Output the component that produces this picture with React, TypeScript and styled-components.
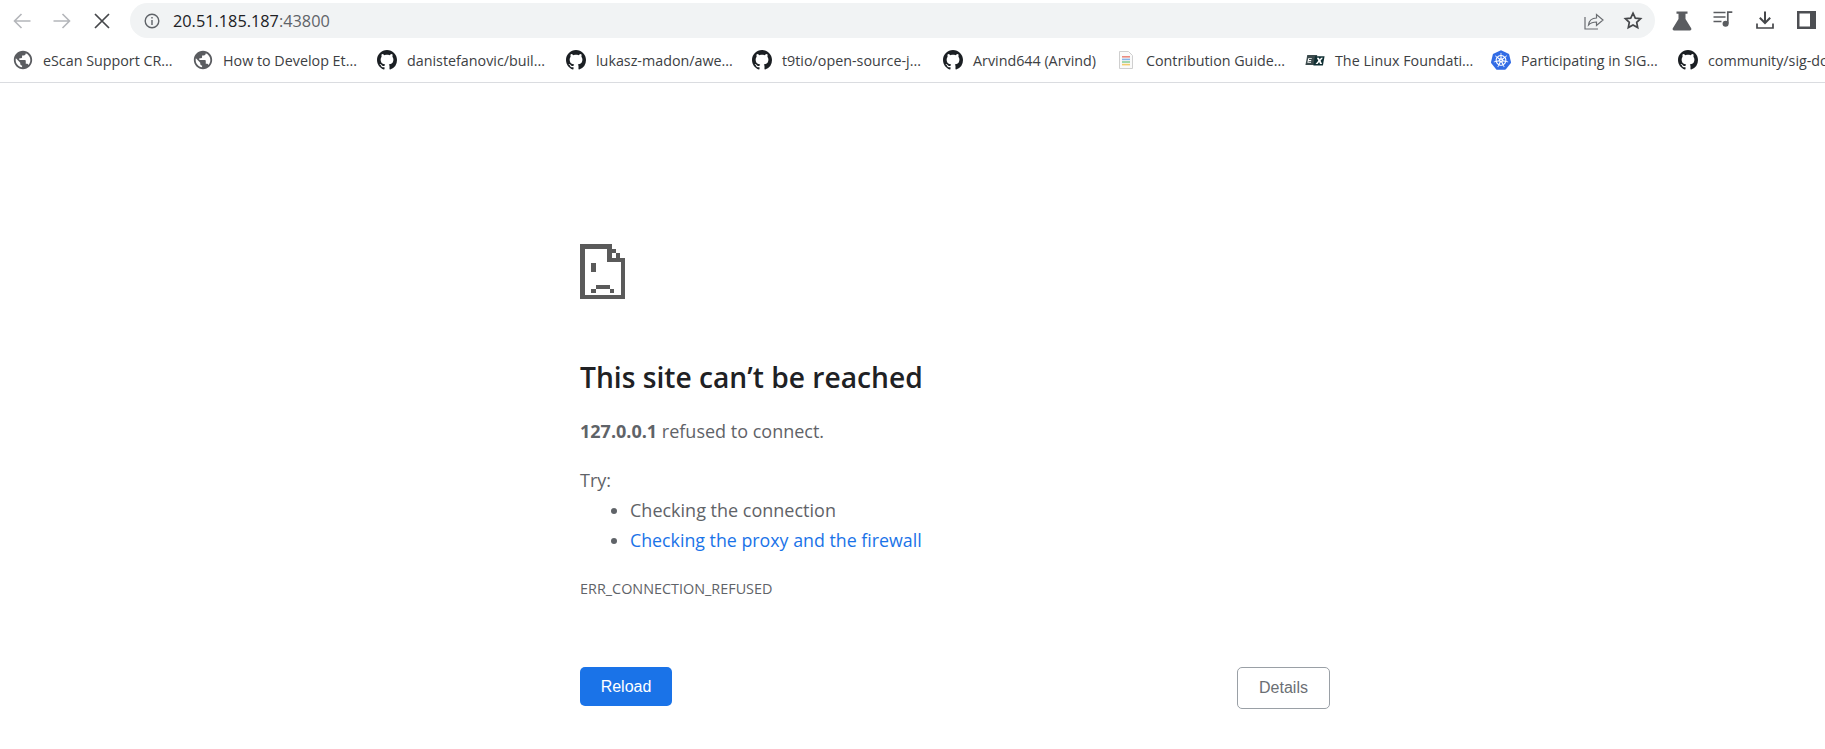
import styled, { createGlobalStyle } from 'styled-components'
import { BsGithub } from 'react-icons/bs'
import { MdPublic } from 'react-icons/md'
import { SiKubernetes } from 'react-icons/si'

const GlobalStyle = createGlobalStyle`
  html, body {
    margin: 0;
    background: #fff;
    overflow: hidden;
  }
  body {
    font-family: "Open Sans", "Noto Sans", sans-serif;
  }
`

const bookmarks = [
  { icon: 'globe', label: 'eScan Support CR...', width: 180 },
  { icon: 'globe', label: 'How to Develop Et...', width: 184 },
  { icon: 'github', label: 'danistefanovic/buil...', width: 189 },
  { icon: 'github', label: 'lukasz-madon/awe...', width: 186 },
  { icon: 'github', label: 't9tio/open-source-j...', width: 191 },
  { icon: 'github', label: 'Arvind644 (Arvind)', width: 173 },
  { icon: 'doc', label: 'Contribution Guide...', width: 189 },
  { icon: 'edx', label: 'The Linux Foundati...', width: 186 },
  { icon: 'k8s', label: 'Participating in SIG...', width: 187 },
  { icon: 'github', label: 'community/sig-docs', width: 190 },
]

function Favicon({ kind }: { kind: string }) {
  if (kind === 'globe') return <GlobeIcon />
  if (kind === 'github') return <GithubIcon />
  if (kind === 'k8s') return <KubeIcon />
  if (kind === 'doc') {
    return (
      <svg width="20" height="20" viewBox="0 0 20 20">
        <path d="M3.5 1.5h9l4 4v13h-13z" fill="#fafafa" stroke="#cfcfcf" />
        <rect x="6" y="6" width="8" height="1.6" fill="#ea8a80" />
        <rect x="6" y="8.6" width="8" height="1.6" fill="#8ab4e8" />
        <rect x="6" y="11.2" width="8" height="1.6" fill="#8ccf9c" />
        <rect x="6" y="13.8" width="8" height="1.6" fill="#f2cc6b" />
      </svg>
    )
  }
  return (
    <svg width="22" height="20" viewBox="0 0 22 20">
      <path d="M2.5 4.5h11l-2 11h-11z" fill="#3b4a4c" />
      <path d="M11 6h10.5l-1.8 10H9.2z" fill="#0f2f33" />
      <path d="M13 7.5l1.6 3.2-3 3.8h2.2l1.7-2.3 1 2.3h2.3l-1.7-3.6 2.7-3.4h-2.2l-1.4 2-.9-2z" fill="#fff" />
      <path d="M3.5 8h4v1h-3l-.2 1h2.6l-.2 1H4l-.2 1h3l-.2 1h-4z" fill="#fff" />
    </svg>
  )
}

function App() {
  return (
    <>
      <GlobalStyle />
      <Toolbar>
        <NavButton $color="#b4b6ba">
          <svg width="20" height="20" viewBox="0 0 20 20" fill="none" stroke="currentColor" strokeWidth="1.6">
            <path d="M18.5 10H2.5M9.5 3l-7 7 7 7" />
          </svg>
        </NavButton>
        <NavButton $color="#b4b6ba">
          <svg width="20" height="20" viewBox="0 0 20 20" fill="none" stroke="currentColor" strokeWidth="1.6">
            <path d="M1.5 10h16M10.5 3l7 7-7 7" />
          </svg>
        </NavButton>
        <NavButton $color="#45474a">
          <svg width="18" height="18" viewBox="0 0 18 18" fill="none" stroke="currentColor" strokeWidth="1.7">
            <path d="M2 2l14 14M16 2L2 16" />
          </svg>
        </NavButton>
        <AddressBar>
          <svg width="16" height="16" viewBox="0 0 16 16" fill="none" stroke="#5f6368" strokeWidth="1.4">
            <circle cx="8" cy="8" r="6.8" />
            <path d="M8 7v5M8 4v1.6" />
          </svg>
          <Url>
            20.51.185.187<Port>:43800</Port>
          </Url>
          <BarActions>
            <svg width="20" height="18" viewBox="0 0 20 18" fill="none" stroke="#6a6d71" strokeWidth="1.2">
              <path d="M1 5v12h13" />
              <path d="M4.5 13c.6-4.5 3.4-7 8-7V2.5l6.5 5.5-6.500 5.500V10c-3.500 0-6 1-8 3z" />
            </svg>
            <svg width="20" height="19" viewBox="0 0 20 19" fill="none" stroke="#45474a" strokeWidth="1.7">
              <path d="M10 2.200l2.300 4.900 5.300.6-3.900 3.600 1 5.300L10 14l-4.700 2.600 1-5.300-3.900-3.600 5.300-.6z" />
            </svg>
          </BarActions>
        </AddressBar>
        <ExtensionList>
          <ExtensionButton>
            <svg width="20" height="20" viewBox="0 0 20 20" fill="#5a5c60">
              <path d="M4.500 0.500h11v2.200h-2v5.200l5.700 9.300c.6 1-.1 2.300-1.300 2.300H2.100C.9 19.500.2 18.200.8 17.200l5.700-9.300V2.700h-2z" />
            </svg>
          </ExtensionButton>
          <ExtensionButton>
            <svg width="20" height="16" viewBox="0 0 20 16" fill="none" stroke="#5a5c60" strokeWidth="1.7">
              <path d="M0.500 1.500h12M0.500 6h12M0.500 10.500h8" />
              <path d="M14.800 12.500V1.200h4.500" />
              <circle cx="12.600" cy="12.800" r="2.200" fill="#5a5c60" />
            </svg>
          </ExtensionButton>
          <ExtensionButton>
            <svg width="18" height="18" viewBox="0 0 18 18" fill="none" stroke="#45474a" strokeWidth="2">
              <path d="M9 0.500v11M3.800 6.800L9 12l5.200-5.200" />
              <path d="M1 12.500v4.500h16v-4.500" strokeWidth="1.700" />
            </svg>
          </ExtensionButton>
          <ExtensionButton>
            <svg width="19" height="18" viewBox="0 0 19 18">
              <rect x="1.250" y="1.250" width="16.500" height="15.500" fill="none" stroke="#4d4f53" strokeWidth="2.500" />
              <rect x="13" y="1" width="5" height="16" fill="#4d4f53" />
            </svg>
          </ExtensionButton>
        </ExtensionList>
      </Toolbar>

      <BookmarkBar>
        {bookmarks.map((b) => (
          <Bookmark key={b.label} $width={b.width}>
            <FaviconSlot>
              <Favicon kind={b.icon} />
            </FaviconSlot>
            <BookmarkLabel>{b.label}</BookmarkLabel>
          </Bookmark>
        ))}
      </BookmarkBar>

      <Main>
        <SadIcon width="45" height="55" viewBox="0 0 45 55" fill="#5a5a5a" shapeRendering="crispEdges">
          <path d="M0 0h31.500v4.500H4.500v46h36V18H45v37H0z" />
          <path d="M27 4.500h4.500V14H45v4H27z" />
          <rect x="31.500" y="5" width="4.200" height="4" />
          <rect x="35.700" y="9" width="4.300" height="4.500" />
          <rect x="40" y="13.500" width="5" height="4.500" />
          <rect x="11" y="19" width="4.700" height="8.500" />
          <rect x="15.700" y="40.500" width="14" height="4" />
          <rect x="11" y="44.500" width="4.700" height="4.500" />
          <rect x="29.700" y="44.500" width="4.700" height="4.500" />
        </SadIcon>
        <Heading>This site can’t be reached</Heading>
        <Summary>
          <strong>127.0.0.1</strong> refused to connect.
        </Summary>
        <TryLabel>Try:</TryLabel>
        <Suggestions>
          <li>Checking the connection</li>
          <li>
            <SuggestionLink href="#">Checking the proxy and the firewall</SuggestionLink>
          </li>
        </Suggestions>
        <ErrorCode>ERR_CONNECTION_REFUSED</ErrorCode>
        <ButtonRow>
          <ReloadButton>Reload</ReloadButton>
          <DetailsButton>Details</DetailsButton>
        </ButtonRow>
      </Main>
    </>
  )
}

// Browser chrome

const Toolbar = styled.div`
  display: flex;
  align-items: center;
  height: 35px;
  padding: 3px 0 0 2px;
  overflow: hidden;
`

const NavButton = styled.div<{ $color: string }>`
  flex: none;
  width: 40px;
  height: 35px;
  display: flex;
  align-items: center;
  justify-content: center;
  color: ${(p) => p.$color};
`

const AddressBar = styled.div`
  flex: none;
  margin-left: 8px;
  width: 1525px;
  height: 35px;
  box-sizing: border-box;
  padding: 0 12px 0 14px;
  border-radius: 18px;
  background: #f1f3f4;

  display: flex;
  align-items: center;
`

const Url = styled.span`
  margin-left: 13px;
  font-size: 16.300px;
  color: #202124;
`

const Port = styled.span`
  color: #5f6368;
`

const BarActions = styled.div`
  margin-left: auto;
  display: flex;
  align-items: center;
  gap: 19px;
`

const ExtensionList = styled.div`
  flex: none;
  margin-left: 6px;
  display: flex;
`

const ExtensionButton = styled.div`
  width: 41.500px;
  display: flex;
  justify-content: center;
`

const BookmarkBar = styled.div`
  height: 45px;
  box-sizing: border-box;
  padding-left: 13px;
  border-bottom: 1px solid #dadce0;
  overflow: hidden;

  display: flex;
  align-items: center;
`

const Bookmark = styled.div<{ $width: number }>`
  flex: 0 0 ${(p) => p.$width}px;
  display: flex;
  align-items: center;
  gap: 10px;
`

const FaviconSlot = styled.span`
  flex: 0 0 20px;
  min-width: 0;
  height: 20px;
  display: flex;
  align-items: center;
  justify-content: center;
`

const GlobeIcon = styled(MdPublic).attrs({ size: 22 })`
  color: #5a5c60;
  flex: none;
`

const GithubIcon = styled(BsGithub).attrs({ size: 20 })`
  color: #1b1f23;
  flex: none;
`

const KubeIcon = styled(SiKubernetes).attrs({ size: 20 })`
  color: #326ce5;
  flex: none;
`

const BookmarkLabel = styled.span`
  font-size: 14.300px;
  color: #3c4043;
  white-space: nowrap;
`

// Error page

const Main = styled.main`
  padding: 161px 0 0 580px;
  width: 750px;
  color: #5f6368;
`

const SadIcon = styled.svg`
  display: block;
`

const Heading = styled.h1`
  margin: 60px 0 0;
  font-size: 28.200px;
  line-height: 36px;
  font-weight: 600;
  color: #202124;
`

const Summary = styled.p`
  margin: 22px 0 0;
  font-size: 18px;
  line-height: 28px;

  strong {
    font-weight: 700;
  }
`

const TryLabel = styled.p`
  margin: 21px 0 0;
  font-size: 18px;
  line-height: 28px;
`

const Suggestions = styled.ul`
  margin: 2px 0 0;
  padding-left: 50px;
  font-size: 18px;
  line-height: 29.700px;
`

const SuggestionLink = styled.a`
  color: #1a73e8;
  font-size: 17.800px;
  text-decoration: none;
`

const ErrorCode = styled.div`
  margin-top: 24px;
  font-size: 14.400px;
  line-height: 20px;
`

const ButtonRow = styled.div`
  margin-top: 68px;
  display: flex;
  justify-content: space-between;
  align-items: flex-start;
`

const BaseButton = styled.button`
  padding: 0;
  border-radius: 5px;
  font-family: "Liberation Sans", Arial, sans-serif;
  font-size: 16px;
`

const ReloadButton = styled(BaseButton)`
  width: 92px;
  height: 39px;
  border: 0;
  background: #1a73e8;
  color: #fff;
`

const DetailsButton = styled(BaseButton)`
  width: 93px;
  height: 42px;
  border: 1px solid #9aa0a6;
  background: #fff;
  color: #6b6f74;
`

export default App
